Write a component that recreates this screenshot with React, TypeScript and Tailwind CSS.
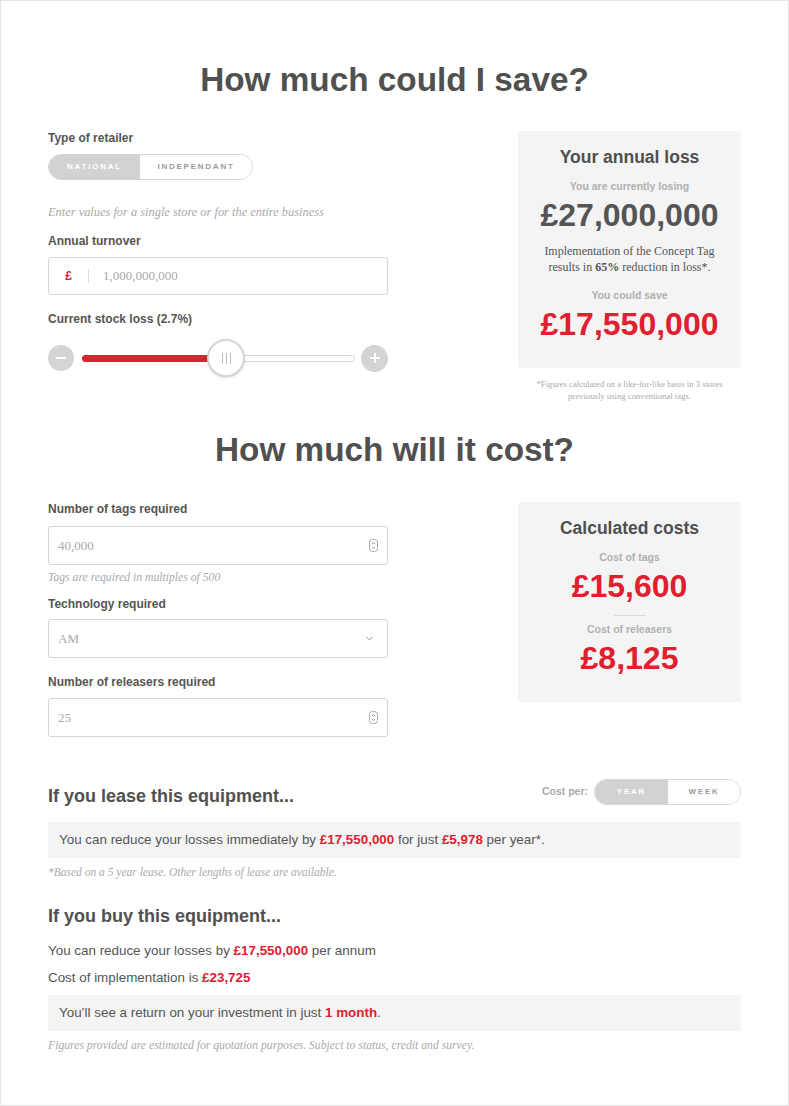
import { ChevronDown } from 'lucide-react';

const sans = { fontFamily: '"Liberation Sans", Arial, sans-serif' };

const Label = ({ children, className = '' }: { children: React.ReactNode; className?: string }) => (
  <div className={`text-[12px] leading-[15px] font-bold text-[#555] ${className}`}>{children}</div>
);

const Hint = ({ children, className = '' }: { children: React.ReactNode; className?: string }) => (
  <div className={`font-['Liberation_Serif',serif] italic leading-[14px] text-[#aaa] ${className}`}>
    {children}
  </div>
);

const Spinner = () => (
  <svg width="9" height="13" viewBox="0 0 9 13" className="shrink-0">
    <rect x="0.5" y="0.5" width="8" height="12" rx="3" fill="none" stroke="#aaa" />
    <path d="M2.9 5 L4.5 3.5 L6.1 5" fill="none" stroke="#888" strokeWidth="0.9" />
    <path d="M2.9 8 L4.5 9.5 L6.1 8" fill="none" stroke="#888" strokeWidth="0.9" />
  </svg>
);

const NumberField = ({ value, className = '' }: { value: string; className?: string }) => (
  <div
    className={`h-[39px] border border-[#d6d6d6] rounded-[3px] bg-white flex items-center justify-between pl-[9px] pr-[9px] ${className}`}
  >
    <span className="font-['Liberation_Serif',serif] text-[13px] text-[#aaa]">{value}</span>
    <Spinner />
  </div>
);

const Toggle = ({ left, right, leftW, rightW }: { left: string; right: string; leftW: string; rightW: string }) => (
  <div className="flex h-[26px] rounded-full border border-[#d4d4d4] overflow-hidden">
    <div
      className={`${leftW} bg-[#d2d2d2] text-white flex items-center justify-center text-[8px] font-bold tracking-[0.22em]`}
    >
      {left}
    </div>
    <div className={`${rightW} bg-white text-[#9a9a9a] flex items-center justify-center text-[8px] font-bold tracking-[0.22em]`}>
      {right}
    </div>
  </div>
);

const Red = ({ children }: { children: React.ReactNode }) => (
  <span className="font-bold text-[#e0202f]">{children}</span>
);

export default function App() {
  return (
    <div style={sans} className="min-h-[1106px] border border-[#e4e4e4] bg-white px-[47px] pt-[60px] text-[#555]">
      <h1 className="text-center text-[33.3px] leading-[38px] font-bold text-[#505050]">How much could I save?</h1>

      <div className="flex justify-between items-start mt-[32px]">
        <div className="w-[340px]">
          <Label>Type of retailer</Label>
          <div className="mt-[8px] w-[205px]">
            <Toggle left="NATIONAL" right="INDEPENDANT" leftW="w-[91px]" rightW="flex-1" />
          </div>
          <Hint className="mt-[25px] text-[12.4px]">Enter values for a single store or for the entire business</Hint>
          <Label className="mt-[15px]">Annual turnover</Label>
          <div className="mt-[8px] h-[38px] border border-[#d6d6d6] rounded-[3px] flex items-center">
            <span className="w-[39px] text-center text-[12px] font-bold text-[#e0202f]">£</span>
            <span className="h-[14px] w-px bg-[#ddd]" />
            <span className="ml-[14px] font-['Liberation_Serif',serif] text-[13px] text-[#aaa]">1,000,000,000</span>
          </div>
          <Label className="mt-[17px]">Current stock loss (2.7%)</Label>
          <div className="mt-[12px] h-[38px] flex items-center">
            <div className="w-[26px] h-[26px] rounded-full bg-[#d4d4d4] flex items-center justify-center">
              <span className="w-[10px] h-[2px] bg-white" />
            </div>
            <div className="ml-[8px] w-[273px] flex items-center relative">
              <div className="w-[132px] h-[7px] rounded-l-full bg-[#e0202f]" />
              <div className="flex-1 h-[7px] rounded-r-full border border-[#d6d6d6] bg-white" />
              <div className="absolute left-[125px] top-1/2 -translate-y-1/2 w-[38px] h-[38px] rounded-full bg-white border-2 border-[#d6d6d6] shadow-sm flex items-center justify-center gap-[3px]">
                <span className="w-px h-[11px] bg-[#bbb]" />
                <span className="w-px h-[11px] bg-[#bbb]" />
                <span className="w-px h-[11px] bg-[#bbb]" />
              </div>
            </div>
            <div className="ml-auto w-[27px] h-[27px] rounded-full bg-[#d4d4d4] flex items-center justify-center relative">
              <span className="w-[10px] h-[2px] bg-white" />
              <span className="absolute w-[2px] h-[10px] bg-white" />
            </div>
          </div>
        </div>

        <div className="w-[223px]">
          <div className="bg-[#f4f4f4] rounded-[3px] text-center pt-[15px] pb-[26px]">
            <div className="text-[17.5px] leading-[22px] font-bold text-[#4f4f4f]">Your annual loss</div>
            <div className="mt-[11px] text-[10.5px] leading-[14px] font-bold text-[#b0b0b0]">You are currently losing</div>
            <div className="mt-[4px] text-[32px] leading-[36px] font-bold text-[#555]">£27,000,000</div>
            <div className="mt-[10px] font-['Liberation_Serif',serif] text-[12px] leading-[16px] text-[#555]">
              Implementation of the Concept Tag
              <br />
              results in <b>65%</b> reduction in loss*.
            </div>
            <div className="mt-[13px] text-[10.5px] leading-[14px] font-bold text-[#b0b0b0]">You could save</div>
            <div className="mt-[4px] text-[32px] leading-[36px] font-bold text-[#e0202f]">£17,550,000</div>
          </div>
          <div className="mt-[10px] text-center font-['Liberation_Serif',serif] text-[8.7px] leading-[12px] text-[#aaa]">
            *Figures calculated on a like-for-like basis in 3 stores
            <br />
            previously using conventional tags.
          </div>
        </div>
      </div>

      <h1 className="mt-[29px] text-center text-[33.3px] leading-[38px] font-bold text-[#505050]">How much will it cost?</h1>

      <div className="flex justify-between items-start mt-[33px]">
        <div className="w-[340px]">
          <Label>Number of tags required</Label>
          <NumberField value="40,000" className="mt-[9px] h-[38px]" />
          <Hint className="mt-[6px] text-[11.7px]">Tags are required in multiples of 500</Hint>
          <Label className="mt-[12px]">Technology required</Label>
          <div className="mt-[7px] h-[39px] border border-[#d6d6d6] rounded-[3px] flex items-center justify-between pl-[9px] pr-[12px]">
            <span className="font-['Liberation_Serif',serif] text-[13px] text-[#aaa]">AM</span>
            <ChevronDown size={11} strokeWidth={2} color="#888" />
          </div>
          <Label className="mt-[17px]">Number of releasers required</Label>
          <NumberField value="25" className="mt-[8px]" />
        </div>

        <div className="w-[223px] bg-[#f4f4f4] rounded-[3px] text-center pt-[15px] pb-[26px]">
          <div className="text-[17.5px] leading-[22px] font-bold text-[#4f4f4f]">Calculated costs</div>
          <div className="mt-[11px] text-[10.5px] leading-[14px] font-bold text-[#b0b0b0]">Cost of tags</div>
          <div className="mt-[4px] text-[32px] leading-[36px] font-bold text-[#e0202f]">£15,600</div>
          <div className="mt-[11px] mx-auto w-[32px] h-px bg-[#dcdcdc]" />
          <div className="mt-[6px] text-[10.5px] leading-[14px] font-bold text-[#b0b0b0]">Cost of releasers</div>
          <div className="mt-[4px] text-[32px] leading-[36px] font-bold text-[#e0202f]">£8,125</div>
        </div>
      </div>

      <div className="mt-[42px] flex items-start justify-between">
        <h2 className="mt-[6px] text-[18px] leading-[22px] font-bold text-[#505050]">If you lease this equipment...</h2>
        <div className="flex items-center gap-[6px]">
          <span className="text-[10.5px] font-bold text-[#aaa]">Cost per:</span>
          <div className="w-[147px]">
            <Toggle left="YEAR" right="WEEK" leftW="w-[73px]" rightW="flex-1" />
          </div>
        </div>
      </div>
      <div className="mt-[15px] h-[36px] bg-[#f4f4f4] flex items-center pl-[11px] text-[13.4px] text-[#555]">
        <span>
          You can reduce your losses immediately by <Red>£17,550,000</Red> for just <Red>£5,978</Red> per year*.
        </span>
      </div>
      <Hint className="mt-[7px] text-[11.5px]">*Based on a 5 year lease. Other lengths of lease are available.</Hint>

      <h2 className="mt-[26px] text-[18px] leading-[22px] font-bold text-[#505050]">If you buy this equipment...</h2>
      <div className="mt-[15px] text-[13.4px] leading-[18px]">
        You can reduce your losses by <Red>£17,550,000</Red> per annum
      </div>
      <div className="mt-[9px] text-[13.4px] leading-[18px]">
        Cost of implementation is <Red>£23,725</Red>
      </div>
      <div className="mt-[8px] h-[36px] bg-[#f4f4f4] flex items-center pl-[11px] text-[13.4px] text-[#555]">
        <span>
          You’ll see a return on your investment in just <Red>1 month</Red>.
        </span>
      </div>
      <Hint className="mt-[8px] text-[11.7px]">
        Figures provided are estimated for quotation purposes. Subject to status, credit and survey.
      </Hint>
    </div>
  );
}
